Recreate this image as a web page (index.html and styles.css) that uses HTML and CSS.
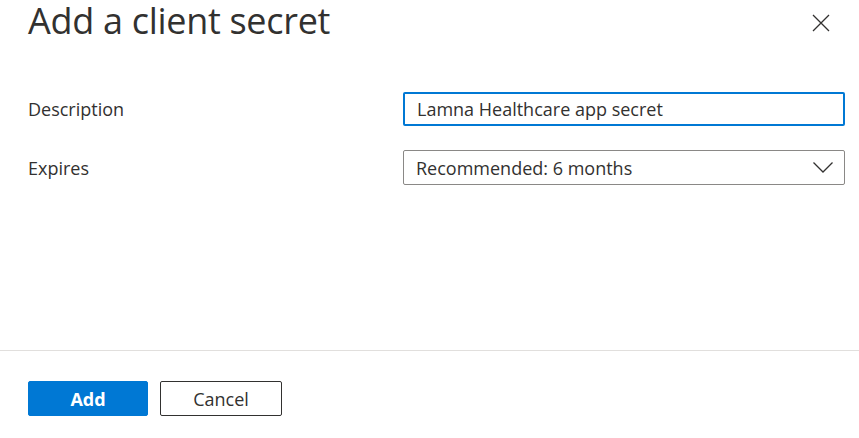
FILE: index.html
```html
<!DOCTYPE html>
<html lang="en">
<head>
<meta charset="utf-8">
<title>Add a client secret</title>
<link rel="stylesheet" href="styles.css">
</head>
<body>
<div class="panel">
  <header class="header">
    <h1 class="title">Add a client secret</h1>
    <button class="close" aria-label="Close">
      <svg width="18" height="18" viewBox="0 0 18 18"><path d="M1 1L17 17M17 1L1 17" stroke="#323130" stroke-width="1.3" fill="none"/></svg>
    </button>
  </header>
  <main class="form">
    <div class="row">
      <label class="label" for="desc">Description</label>
      <div class="field input-field"><span class="value" id="desc">Lamna Healthcare app secret</span></div>
    </div>
    <div class="row">
      <label class="label">Expires</label>
      <div class="field select-field">
        <span class="value">Recommended: 6 months</span>
        <svg class="chev" width="20" height="11" viewBox="0 0 20 11"><path d="M0.5 0.5L10 10L19.5 0.5" stroke="#323130" stroke-width="1.3" fill="none"/></svg>
      </div>
    </div>
  </main>
  <footer class="footer">
    <button class="btn primary">Add</button>
    <button class="btn secondary">Cancel</button>
  </footer>
</div>
</body>
</html>
```
FILE: styles.css
```css
* { box-sizing: border-box; }
html, body { margin: 0; padding: 0; background: #fff; }
body {
  font-family: "Open Sans", "Noto Sans", sans-serif;
  color: #323130;
  width: 859px;
  height: 438px;
  overflow: hidden;
}
.panel {
  display: flex;
  flex-direction: column;
  height: 438px;
}
.header {
  display: flex;
  justify-content: space-between;
  align-items: flex-start;
  padding: 3px 29px 0 28px;
  height: 42px;
}
.title {
  margin: 0;
  font-size: 36px;
  line-height: 36px;
  font-weight: 400;
  color: #323130;
  letter-spacing: -0.3px;
}
.close {
  margin-top: 11px;
  width: 18px;
  height: 18px;
  padding: 0;
  border: 0;
  background: none;
  display: flex;
}
.form {
  flex: 1;
  padding: 50px 14px 0 28px;
  display: flex;
  flex-direction: column;
  gap: 24px;
}
.row {
  display: grid;
  grid-template-columns: 375px 1fr;
  align-items: center;
}
.label {
  font-size: 18px;
  color: #323130;
}
.field {
  display: flex;
  align-items: center;
  border-radius: 2px;
  font-size: 18px;
  color: #323130;
}
.input-field {
  height: 34px;
  border: 2px solid #0078d4;
  padding: 0 12px;
}
.select-field {
  height: 35px;
  border: 1px solid #8a8886;
  padding: 0 12px;
  justify-content: space-between;
}
.chev { margin-right: -1px; }
.footer {
  height: 88px;
  border-top: 1px solid #e1dfdd;
  padding: 30px 28px 0;
  display: flex;
  align-items: flex-start;
  gap: 12px;
}
.btn {
  height: 35px;
  border-radius: 2px;
  font-family: "Open Sans", "Noto Sans", sans-serif;
  font-size: 18px;
  padding: 0;
  width: 120px;
}
.primary {
  background: #0078d4;
  border: 1px solid #0078d4;
  color: #fff;
  font-weight: 700;
}
.secondary {
  width: 122px;
  background: #fff;
  border: 1px solid #323130;
  color: #323130;
  font-weight: 500;
}
```
